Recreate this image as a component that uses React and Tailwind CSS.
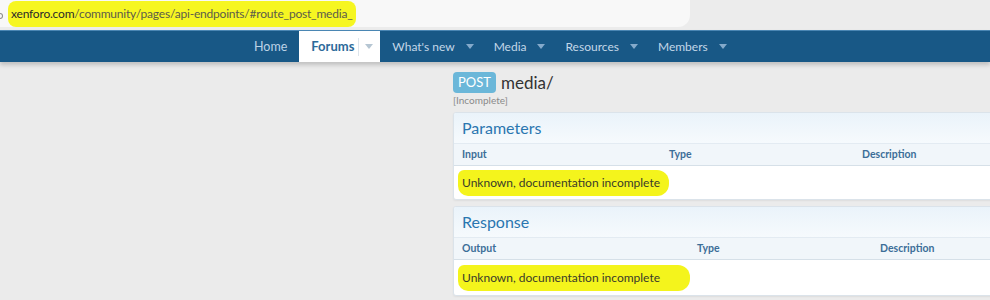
import React from "react";

const font = { fontFamily: 'Lato, "Noto Sans", sans-serif' };

const navItems = [
  { label: "What's new" },
  { label: "Media" },
  { label: "Resources" },
  { label: "Members" },
];

const Caret = ({ className }) => (
  <svg width="8" height="5" viewBox="0 0 8 5" className={className}>
    <path d="M0 0h8L4 5z" fill="currentColor" />
  </svg>
);

const Block = ({ title, cols, widths, rowH, mark }) => (
  <div className="w-[560px] rounded-[3px] border border-[#dbe3ea] bg-white shadow-[0_1px_2px_rgba(0,0,0,0.06)] overflow-hidden">
    <div className="h-[31px] flex items-center px-[8px] bg-gradient-to-b from-[#eaf3fa] to-[#f6fafd] border-b border-[#e3ebf2]">
      <span className="text-[16px] text-[#2a76b0]">{title}</span>
    </div>
    <div className="h-[22px] flex items-center px-[8px] bg-[#f1f6fa] border-b border-[#d6e0e8] text-[10.5px] font-bold text-[#3c6e98]">
      <span className={widths[0]}>{cols[0]}</span>
      <span className={widths[1]}>{cols[1]}</span>
      <span>{cols[2]}</span>
    </div>
    <div className={`${rowH} flex items-center px-[4px]`}>
      <span className={`bg-[#f4f41c] rounded-tl-[6px] rounded-bl-[10px] rounded-r-[12px] pl-[4px] py-[5px] text-[12px] text-[#3a3a2a] leading-[16px] ${mark}`}>
        Unknown, documentation incomplete
      </span>
    </div>
  </div>
);

const App = () => {
  return (
    <div className="w-[990px] h-[300px] overflow-hidden bg-[#ebebeb]" style={font}>
      <div className="h-[30px] flex bg-[#ececec]">
        <div className="w-[690px] h-[27px] bg-[#f8f8f8] rounded-br-[12px] flex items-center">
          {/* edge of the address-bar icon, cropped in the shot */}
          <span className="w-[3px] h-[6px] mt-[4px] rounded-r-[3px] border-[1.5px] border-l-0 border-[#8a8a8a]" />
          <span className="ml-[5px] bg-[#f6f621] rounded-[8px] px-[3px] py-[4px] text-[12px] tracking-[-0.2px]">
            <span className="text-[#2a2a2a]">xenforo.com</span>
            <span className="text-[#5c5c4a]">/community/pages/api-endpoints/#route_post_media_</span>
          </span>
        </div>
      </div>
      <div className="h-[32px] bg-[#185886] border-t border-[#4a86b3] flex pl-[242px] text-[12px] shadow-[0_3px_4px_rgba(0,0,0,0.18)] relative">
        <div className="px-[12px] flex items-center text-[#bcd3e6] text-[12.5px] pt-[1px]">Home</div>
        <div className="bg-white flex items-center pl-[12px] pr-[7px] h-full">
          <span className="font-bold text-[13px] text-[#2c6a9a]">Forums</span>
          <span className="w-px h-[18px] bg-[#dde5ec] ml-[4px] mr-[6px]" />
          <Caret className="text-[#b6c6d3]" />
        </div>
        {navItems.map((item) => (
          <div key={item.label} className="flex items-center pl-[12px] pr-[8px] text-[#c3d7e8]">
            <span>{item.label}</span>
            <Caret className="ml-[11px] text-[#84aacb]" />
          </div>
        ))}
      </div>
      <div className="pl-[453px] pt-[10px]">
        <div className="flex items-center gap-[5px]">
          <span className="bg-[#6bb7d9] text-white text-[13px] rounded-[4px] px-[5px] h-[21px] flex items-center">POST</span>
          <span className="text-[17px] text-[#333] leading-[21px]">media/</span>
        </div>
        <div className="text-[10px] text-[#8a8a8a] mt-[1px] leading-[12px]">[Incomplete]</div>
        <div className="mt-[6px] flex flex-col gap-[6px]">
          <Block title="Parameters" cols={["Input", "Type", "Description"]} widths={["w-[207px]", "w-[193px]"]} rowH="h-[33px]" mark="pr-[9px]" />
          <Block title="Response" cols={["Output", "Type", "Description"]} widths={["w-[235px]", "w-[183px]"]} rowH="h-[35px]" mark="pr-[30px]" />
        </div>
      </div>
    </div>
  );
};

export default App;
